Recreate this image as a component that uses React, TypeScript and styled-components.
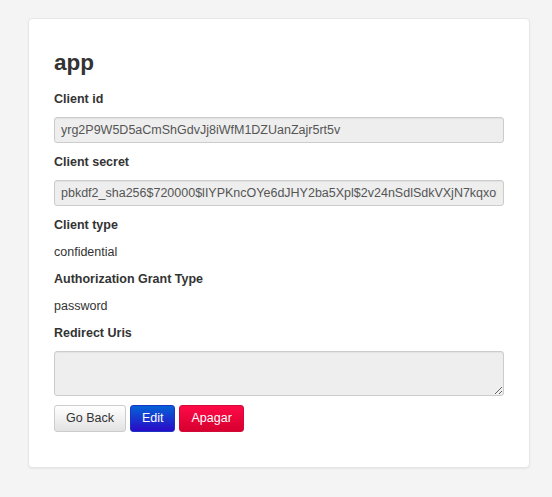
import * as React from "react";
import styled, { createGlobalStyle } from "styled-components";

const GlobalStyle = createGlobalStyle`
  html, body {
    margin: 0;
    padding: 0;
    background: #f4f4f4;
  }
  body {
    font-family: "Liberation Sans", Arial, sans-serif;
    font-size: 12.5px;
    color: #333;
  }
`;

const Page = styled.div`
  padding: 18px 22px 29px 28px;
`;

const Card = styled.div`
  box-sizing: border-box;
  width: 502px;
  padding: 30px 25px 35px;
  background: #fff;
  border: 1px solid #e6e6e6;
  border-radius: 4px;
  box-shadow: 0 1px 2px rgba(0, 0, 0, 0.06);
`;

const Title = styled.h2`
  margin: 1px 0 14px;
  font-size: 22.5px;
  line-height: 26px;
  font-weight: 700;
  color: #333;
`;

const FieldLabel = styled.div`
  margin-bottom: 9px;
  font-size: 12.5px;
  line-height: 18px;
  font-weight: 700;
  color: #333;
`;

const Value = styled.div`
  margin-bottom: 9px;
  font-size: 12.5px;
  line-height: 18px;
  color: #333;
`;

const ReadOnlyInput = styled.input`
  display: block;
  box-sizing: border-box;
  width: 100%;
  height: 26px;
  margin: 0 0 10px;
  padding: 0 6px;
  font-family: inherit;
  font-size: 12.5px;
  color: #555;
  background: #eee;
  border: 1px solid #ccc;
  border-radius: 3px;
  box-shadow: inset 0 1px 1px rgba(0, 0, 0, 0.05);
  outline: none;
`;

const ReadOnlyArea = styled.textarea`
  display: block;
  box-sizing: border-box;
  width: 100%;
  height: 45px;
  margin: 0 0 9px;
  padding: 4px 6px;
  font-family: inherit;
  font-size: 12.5px;
  color: #555;
  background: #eee;
  border: 1px solid #ccc;
  border-radius: 3px;
  box-shadow: inset 0 1px 1px rgba(0, 0, 0, 0.05);
  outline: none;
`;

const Actions = styled.div`
  display: flex;
  gap: 4px;
`;

const variants = {
  default: {
    bg: "linear-gradient(to bottom, #ffffff 0%, #e2e2e2 100%)",
    border: "#cccccc",
    color: "#333",
  },
  primary: {
    bg: "linear-gradient(to bottom, #0562d6 0%, #2a0ac8 100%)",
    border: "#1a34c2",
    color: "#fff",
  },
  danger: {
    bg: "linear-gradient(to bottom, #ff0a47 0%, #d6002f 100%)",
    border: "#d10a3a",
    color: "#fff",
  },
};

type Variant = keyof typeof variants;

const Button = styled.button<{ $variant: Variant }>`
  box-sizing: border-box;
  height: 27px;
  padding: 0 11px;
  font-family: inherit;
  font-size: 12.5px;
  line-height: 25px;
  color: ${p => variants[p.$variant].color};
  background: ${p => variants[p.$variant].bg};
  border: 1px solid ${p => variants[p.$variant].border};
  border-radius: 3px;
  cursor: pointer;
`;

const App: React.FC = () => (
  <Page>
    <GlobalStyle />
    <Card>
      <Title>app</Title>

      <FieldLabel>Client id</FieldLabel>
      <ReadOnlyInput readOnly value="yrg2P9W5D5aCmShGdvJj8iWfM1DZUanZajr5rt5v" />

      <FieldLabel>Client secret</FieldLabel>
      <ReadOnlyInput
        readOnly
        value="pbkdf2_sha256$720000$lIYPKncOYe6dJHY2ba5Xpl$2v24nSdlSdkVXjN7kqxoR1mZ8dQeTq4="
      />

      <FieldLabel>Client type</FieldLabel>
      <Value>confidential</Value>

      <FieldLabel>Authorization Grant Type</FieldLabel>
      <Value>password</Value>

      <FieldLabel>Redirect Uris</FieldLabel>
      <ReadOnlyArea readOnly value="" />

      <Actions>
        <Button $variant="default">Go Back</Button>
        <Button $variant="primary">Edit</Button>
        <Button $variant="danger">Apagar</Button>
      </Actions>
    </Card>
  </Page>
);

export default App;
